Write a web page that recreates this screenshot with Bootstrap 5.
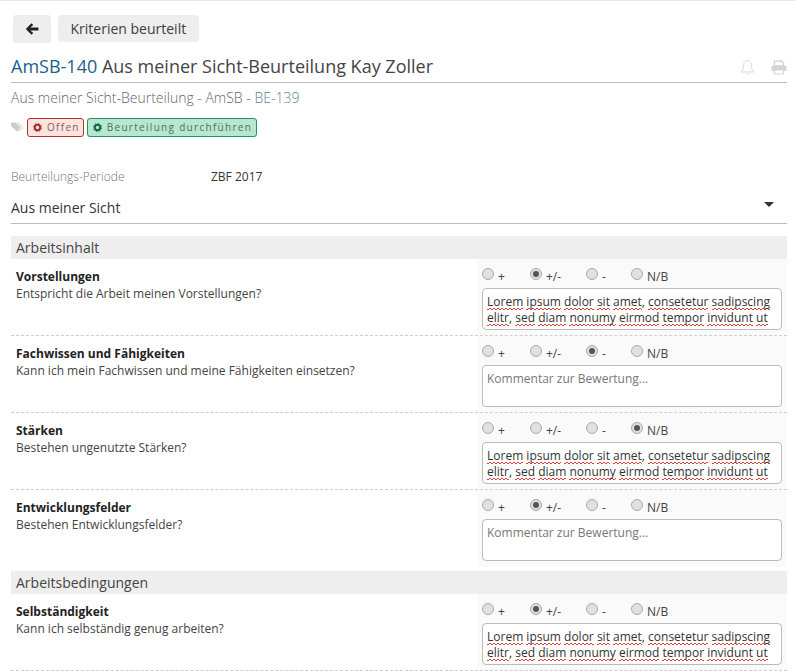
<!DOCTYPE html>
<html lang="de">
<head>
  <meta charset="UTF-8">
  <title>AmSB-140</title>
  <link href="https://cdn.jsdelivr.net/npm/bootstrap@5.3.3/dist/css/bootstrap.min.css" rel="stylesheet">
  <script src="https://cdn.jsdelivr.net/npm/bootstrap@5.3.3/dist/js/bootstrap.bundle.min.js"></script>
  <style>
    html, body { height: 671px; overflow: hidden; }
    body { font-family: "Open Sans", sans-serif; font-size: 12px; color: #333; background: #fff; border-top: 1px solid #e8e8e8; }
    .page-wrap { padding: 14px 9px 0 11px; }
    .top-btn { background: #eee; border-radius: 3px; border: 0; height: 27px; font-size: 14px; color: #3c3c3c; padding: 0 12.5px; margin-right: 7px; line-height: 27px; }
    .back-btn { width: 38px; height: 28px; padding: 0; margin-left: 2px; display: inline-flex; align-items: center; justify-content: center; }
    .title-bar { margin-top: 9px; border-bottom: 1px solid #bbb; height: 31px; }
    .title-text { font-size: 18px; line-height: 29px; color: #444; }
    .title-text b { font-weight: 400; color: #1c5f88; }
    .sub-title { font-size: 14px; font-weight: 300; color: #666; line-height: 20px; margin-top: 5px; }
    .sub-title span { color: #5f7f90; }
    .tag-row { margin-top: 10px; height: 18px; }
    .state-tag { font-size: 10px; letter-spacing: 1.3px; height: 19px; line-height: 16px; border-radius: 3px; border: 1px solid; padding: 0 4px 0 5px; margin-right: 3px; display: inline-flex; align-items: center; gap: 5px; }
    .state-red { background: #fbe3e1; border-color: #b5331f; color: #8c5a52; padding-right: 3px; }
    .state-green { background: #b9e6cf; border-color: #23936a; color: #3f7566; }
    .period-row { margin-top: 32px; line-height: 18px; }
    .period-label { width: 200px; color: #777; font-weight: 300; }
    .period-value { color: #333; }
    .view-select { margin-top: 10px; height: 28px; border-bottom: 1px solid #bbb; font-size: 14px; color: #333; line-height: 24px; padding-right: 13px; }
    .caret-down { width: 0; height: 0; border-left: 5px solid transparent; border-right: 5px solid transparent; border-top: 5px solid #333; margin-top: 6px; }
    .section-head { background: #eee; height: 23px; line-height: 23px; font-size: 14px; font-weight: 400; color: #444; padding-left: 5px; margin: 0; }
    .first-head { margin-top: 12px; }
    .next-head { margin-top: 4px; }
    .crit-row { display: flex; height: 77px; border-bottom: 1px dashed #ccc; padding-left: 5px; }
    .crit-row.no-line { border-bottom: 0; height: 77px; }
    .crit-left { width: 466px; padding-top: 9px; line-height: 18px; color: #444; }
    .crit-left strong { display: block; color: #222; font-weight: 700; margin-bottom: -1px; }
    .crit-right { width: 310px; background: #fafafa; padding: 7px 5px 0 5px; }
    .radio-line { display: flex; height: 22px; color: #444; }
    .radio-line label { display: flex; align-items: flex-start; gap: 4px; line-height: 21px; }
    .radio-dot { width: 12px; height: 12px; border-radius: 50%; background: #e0e0e0; border: 1px solid #aaa; margin-top: 2px; flex: none; display: flex; align-items: center; justify-content: center; }
    .radio-dot.is-on::after { content: ""; width: 6px; height: 6px; border-radius: 50%; background: #555; }
    .opt-a { width: 48px; } .opt-b { width: 56px; } .opt-c { width: 45px; }
    .comment-box { height: 42px; width: 300px; border: 1px solid #bbb; border-radius: 4px; background: #fff; padding: 5px 4px 0; line-height: 16px; color: #333; white-space: nowrap; overflow: hidden; }
    .comment-box.is-empty { color: #777; }
    .comment-box span {
      background-image: linear-gradient(135deg, transparent 40%, #e0403a 40%, #e0403a 60%, transparent 60%), linear-gradient(45deg, transparent 40%, #e0403a 40%, #e0403a 60%, transparent 60%);
      background-size: 4px 2px;
      background-position: 0 100%, 2px 100%;
      background-repeat: repeat-x;
    }
  </style>
</head>
<body>
  <div class="page-wrap">
    <div class="d-flex align-items-start">
      <button type="button" class="top-btn back-btn" aria-label="Zurück">
        <svg width="14" height="12" viewBox="0 0 14 12"><path d="M6.5 0.3 L8.2 2 L5.4 4.5 H13.4 V7.5 H5.4 L8.2 10 L6.5 11.7 L0.8 6 Z" fill="#222"/></svg>
      </button>
      <button type="button" class="top-btn">Kriterien beurteilt</button>
    </div>

    <div class="title-bar d-flex justify-content-between">
      <div class="title-text"><b>AmSB-140</b> Aus meiner Sicht-Beurteilung Kay Zoller</div>
      <div class="d-flex align-items-center gap-3">
        <svg width="15" height="17" viewBox="0 0 15 17" fill="none" stroke="#dcdcdc"><path d="M7.5 1.5 C4.5 1.5 3.6 4 3.5 7 C3.4 10 2.6 11.5 1 13 H14 C12.4 11.5 11.6 10 11.5 7 C11.4 4 10.5 1.5 7.5 1.5 Z"/><path d="M6 14 C6 16 9 16 9 14"/></svg>
        <svg width="16" height="15" viewBox="0 0 16 15"><path d="M3.5 1 H10.5 L12.5 3 V6 H3.5 Z" fill="none" stroke="#d4d4d4" stroke-width="1.4"/><path d="M0.5 7 Q0.5 5.5 2 5.5 H14 Q15.5 5.5 15.5 7 V11 H0.5 Z" fill="#d4d4d4"/><rect x="3.5" y="10" width="9" height="4" fill="#fff" stroke="#d4d4d4"/></svg>
      </div>
    </div>

    <div class="sub-title">Aus meiner Sicht-Beurteilung - AmSB - <span>BE-139</span></div>

    <div class="tag-row d-flex align-items-center">
      <svg class="me-1" width="12" height="10" viewBox="0 0 12 10"><path d="M0 0.5 H4.5 L10 5.5 L6 9.5 L0 4 Z" fill="#ccc"/><path d="M6.5 0.5 L12 5.5 L8 9.5" fill="none" stroke="#ccc"/></svg>
      <span class="state-tag state-red">
        <svg width="9" height="9" viewBox="0 0 10 10"><circle cx="5" cy="5" r="3" fill="none" stroke="#a5341f" stroke-width="2.2"/><circle cx="5" cy="5" r="4.6" fill="none" stroke="#a5341f" stroke-width="1" stroke-dasharray="1.6 2"/></svg>
        Offen</span>
      <span class="state-tag state-green">
        <svg width="9" height="9" viewBox="0 0 10 10"><circle cx="5" cy="5" r="3" fill="none" stroke="#14664f" stroke-width="2.2"/><circle cx="5" cy="5" r="4.6" fill="none" stroke="#14664f" stroke-width="1" stroke-dasharray="1.6 2"/></svg>
        Beurteilung durchführen</span>
    </div>

    <div class="period-row d-flex">
      <div class="period-label">Beurteilungs-Periode</div>
      <div class="period-value">ZBF 2017</div>
    </div>

    <div class="view-select d-flex justify-content-between">
      <span>Aus meiner Sicht</span>
      <span class="caret-down"></span>
    </div>

    <h6 class="section-head first-head">Arbeitsinhalt</h6>

    <div class="crit-row">
      <div class="crit-left"><strong>Vorstellungen</strong>Entspricht die Arbeit meinen Vorstellungen?</div>
      <div class="crit-right">
        <div class="radio-line">
          <label class="opt-a"><i class="radio-dot"></i>+</label>
          <label class="opt-b"><i class="radio-dot is-on"></i>+/-</label>
          <label class="opt-c"><i class="radio-dot"></i>-</label>
          <label><i class="radio-dot"></i>N/B</label>
        </div>
        <div class="comment-box"><span>Lorem</span> <span>ipsum</span> <span>dolor</span> <span>sit</span> <span>amet</span>, <span>consetetur</span> <span>sadipscing</span><br><span>elitr</span>, <span>sed</span> <span>diam</span> <span>nonumy</span> <span>eirmod</span> <span>tempor</span> <span>invidunt</span> <span>ut</span></div>
      </div>
    </div>

    <div class="crit-row">
      <div class="crit-left"><strong>Fachwissen und Fähigkeiten</strong>Kann ich mein Fachwissen und meine Fähigkeiten einsetzen?</div>
      <div class="crit-right">
        <div class="radio-line">
          <label class="opt-a"><i class="radio-dot"></i>+</label>
          <label class="opt-b"><i class="radio-dot"></i>+/-</label>
          <label class="opt-c"><i class="radio-dot is-on"></i>-</label>
          <label><i class="radio-dot"></i>N/B</label>
        </div>
        <div class="comment-box is-empty">Kommentar zur Bewertung...</div>
      </div>
    </div>

    <div class="crit-row">
      <div class="crit-left"><strong>Stärken</strong>Bestehen ungenutzte Stärken?</div>
      <div class="crit-right">
        <div class="radio-line">
          <label class="opt-a"><i class="radio-dot"></i>+</label>
          <label class="opt-b"><i class="radio-dot"></i>+/-</label>
          <label class="opt-c"><i class="radio-dot"></i>-</label>
          <label><i class="radio-dot is-on"></i>N/B</label>
        </div>
        <div class="comment-box"><span>Lorem</span> <span>ipsum</span> <span>dolor</span> <span>sit</span> <span>amet</span>, <span>consetetur</span> <span>sadipscing</span><br><span>elitr</span>, <span>sed</span> <span>diam</span> <span>nonumy</span> <span>eirmod</span> <span>tempor</span> <span>invidunt</span> <span>ut</span></div>
      </div>
    </div>

    <div class="crit-row no-line">
      <div class="crit-left"><strong>Entwicklungsfelder</strong>Bestehen Entwicklungsfelder?</div>
      <div class="crit-right">
        <div class="radio-line">
          <label class="opt-a"><i class="radio-dot"></i>+</label>
          <label class="opt-b"><i class="radio-dot is-on"></i>+/-</label>
          <label class="opt-c"><i class="radio-dot"></i>-</label>
          <label><i class="radio-dot"></i>N/B</label>
        </div>
        <div class="comment-box is-empty">Kommentar zur Bewertung...</div>
      </div>
    </div>

    <h6 class="section-head next-head">Arbeitsbedingungen</h6>

    <div class="crit-row">
      <div class="crit-left"><strong>Selbständigkeit</strong>Kann ich selbständig genug arbeiten?</div>
      <div class="crit-right">
        <div class="radio-line">
          <label class="opt-a"><i class="radio-dot"></i>+</label>
          <label class="opt-b"><i class="radio-dot is-on"></i>+/-</label>
          <label class="opt-c"><i class="radio-dot"></i>-</label>
          <label><i class="radio-dot"></i>N/B</label>
        </div>
        <div class="comment-box"><span>Lorem</span> <span>ipsum</span> <span>dolor</span> <span>sit</span> <span>amet</span>, <span>consetetur</span> <span>sadipscing</span><br><span>elitr</span>, <span>sed</span> <span>diam</span> <span>nonumy</span> <span>eirmod</span> <span>tempor</span> <span>invidunt</span> <span>ut</span></div>
      </div>
    </div>
  </div>
</body>
</html>
